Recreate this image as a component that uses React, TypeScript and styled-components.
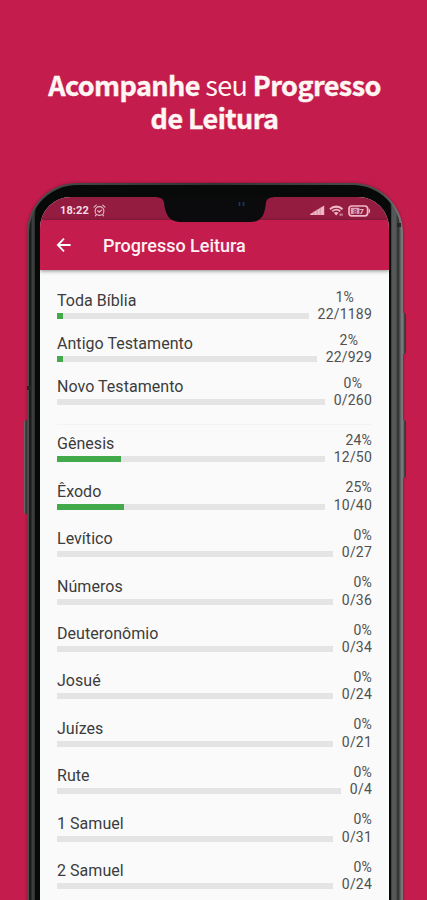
import styled, { createGlobalStyle } from "styled-components";

interface IBook {
  name: string;
  read: number;
  total: number;
  percent: number;
}

const summary: IBook[] = [
  { name: "Toda Bíblia", read: 22, total: 1189, percent: 1 },
  { name: "Antigo Testamento", read: 22, total: 929, percent: 2 },
  { name: "Novo Testamento", read: 0, total: 260, percent: 0 },
];

const books: IBook[] = [
  { name: "Gênesis", read: 12, total: 50, percent: 24 },
  { name: "Êxodo", read: 10, total: 40, percent: 25 },
  { name: "Levítico", read: 0, total: 27, percent: 0 },
  { name: "Números", read: 0, total: 36, percent: 0 },
  { name: "Deuteronômio", read: 0, total: 34, percent: 0 },
  { name: "Josué", read: 0, total: 24, percent: 0 },
  { name: "Juízes", read: 0, total: 21, percent: 0 },
  { name: "Rute", read: 0, total: 4, percent: 0 },
  { name: "1 Samuel", read: 0, total: 31, percent: 0 },
  { name: "2 Samuel", read: 0, total: 24, percent: 0 },
];

function ProgressRow({ book, centered }: { book: IBook; centered?: boolean }) {
  return (
    <Row>
      <RowMain>
        <Name>{book.name}</Name>
        <Track>
          {book.read > 0 ? <Fill style={{ width: `${book.percent}%` }} /> : null}
        </Track>
      </RowMain>
      <Stats $centered={centered}>
        <span>{book.percent}%</span>
        <span>
          {book.read}/{book.total}
        </span>
      </Stats>
    </Row>
  );
}

function AlarmIcon() {
  return (
    <svg width="13" height="13" viewBox="0 0 13 13" fill="none" stroke="#e9bccb" strokeWidth="1.1" strokeLinecap="round">
      <circle cx="6.5" cy="7" r="4.4" />
      <path d="M1 3.2 3.3 1.2M12 3.2 9.7 1.2M4.6 6.6l1.6 1.6 2.4-2.2M3.4 10.6l-1 1.2M9.6 10.6l1 1.2" />
    </svg>
  );
}

function SignalIcon() {
  return (
    <svg width="15" height="11" viewBox="0 0 15 11" fill="#efb6c8">
      <path d="M.2 9 14.2.6V10H.2z" />
      <path d="M3.7 6v4M7.1 4v6M10.200 2v8" stroke="#c0688a" strokeWidth=".5" />
    </svg>
  );
}

function WifiIcon() {
  return (
    <svg width="15" height="12" viewBox="0 0 15 12" fill="none" stroke="#efb6c8">
      <path d="M1 4.2C4.5.8 10 .8 13.5 4.2" strokeWidth="2.2" />
      <path d="M3.3 6.4c2.400-2.100 5.600-2.100 8 0" strokeWidth="1.800" />
      <path d="M4.800 7.700c1.400-1 3.400-1 4.800 0L7.200 10.600z" fill="#efb6c8" stroke="none" />
      <path d="M11.200 8.500v2.300M13 8.500v2.300" strokeWidth="1" />
    </svg>
  );
}

function BatteryIcon() {
  return (
    <svg width="23" height="12" viewBox="0 0 23 12" fill="none">
      <rect x="1" y="1" width="18.6" height="9.8" rx="2.8" stroke="#efb6c8" strokeWidth="1.7" />
      <path d="M20.6 3.2c2 .8 2 4.600 0 5.400z" fill="#efb6c8" />
      <rect x="2.8" y="2.8" width="8.6" height="6.2" rx=".8" fill="#dfa0b4" />
      <text x="5" y="8.8" fontFamily="Roboto, sans-serif" fontSize="8" fontWeight="700" fill="#a03c5e">
        8
      </text>
      <text x="11.2" y="8.8" fontFamily="Roboto, sans-serif" fontSize="8" fontWeight="700" fill="#f0c4d0">
        7
      </text>
    </svg>
  );
}

function BackIcon() {
  return (
    <svg width="16" height="16" viewBox="0 0 16 16" fill="none" stroke="#fff" strokeWidth="1.8">
      <path d="M14.6 8H2M8 1.6 1.8 8 8 14.4" />
    </svg>
  );
}

export default function App() {
  return (
    <Page>
      <GlobalStyle />
      <Headline>
        <b>Acompanhe</b> seu <b>Progresso</b>
        <br />
        <b>de Leitura</b>
      </Headline>
      <Phone>
        <SideKey $side="left" $top={237} $height={94} />
        <SideKey $side="right" $top={130} $height={41} />
        <SideKey $side="right" $top={237} $height={58} />
        <Bezel>
          <Screen>
            <StatusBar>
              <Clock>18:22</Clock>
              <AlarmIcon />
              <StatusIcons>
                <SignalIcon />
                <WifiIcon />
                <BatteryIcon />
              </StatusIcons>
            </StatusBar>
            <Notch width="116" height="27" viewBox="0 0 116 27">
              <path d="M0 0h116v1.5c-4 0-6.4 1.5-7 5C107.5 19 105 26 93 26H25C12 26 8.500 19 7 6.500 6.400 3 4 1.500 0 1.500z" fill="#0b0b0d" />
              <path d="M82.5 6v4M86.500 6v4" stroke="#143a70" strokeWidth="1.6" />
            </Notch>
            <AppBar>
              <BackIcon />
              <Title>Progresso Leitura</Title>
            </AppBar>
            <List>
              <Group $gap={8}>
                {summary.map((book) => (
                  <ProgressRow key={book.name} book={book} centered />
                ))}
              </Group>
              <Divider />
              <Group $gap={12.4}>
                {books.map((book) => (
                  <ProgressRow key={book.name} book={book} />
                ))}
              </Group>
            </List>
          </Screen>
        </Bezel>
        <Antenna $side="left" $top={203} />
        <Antenna $side="right" $top={40} />
      </Phone>
    </Page>
  );
}

const GlobalStyle = createGlobalStyle`
  * {
    box-sizing: border-box;
  }

  body {
    margin: 0;
    background: #c41d4d;
  }
`;

const Page = styled.main`
  width: 427px;
  height: 900px;
  overflow: hidden;
  display: flex;
  flex-direction: column;
  align-items: center;
  background: #c41d4d;
  font-family: Roboto, sans-serif;
`;

const Headline = styled.h1`
  flex: none;
  height: 183px;
  margin: 0 0 0 2px;
  padding-top: 68px;
  color: #fff5f3;
  font-family: "Noto Sans CJK JP", "Noto Sans", sans-serif;
  font-size: 27px;
  font-weight: 400;
  line-height: 33px;
  letter-spacing: -0.6px;
  text-align: center;
  white-space: nowrap;

  b {
    font-weight: 700;
    -webkit-text-stroke: 0.4px #fff5f3;
  }
`;

const Phone = styled.div`
  position: relative;
  flex: none;
  width: 376px;
  height: 760px;
  margin-left: 3px;
  padding: 2px 2px 0;
  border-radius: 50px 50px 0 0;
  background: linear-gradient(90deg, #4a4d4c 0, #303332 50%, #4c4f4e 94%, #77797a 100%);
  box-shadow: 0 0 3px rgba(70, 0, 20, 0.5);
`;

const Bezel = styled.div`
  height: 100%;
  padding: 12px 12px 0 11px;
  border-radius: 48px 48px 0 0;
  background: linear-gradient(
    90deg,
    #1b1d1c 0,
    #1b1d1c 2px,
    #3b3e3d 3px,
    #3b3e3d 5px,
    #080909 7px,
    #080909 calc(100% - 11px),
    #555758 calc(100% - 9px),
    #555758 calc(100% - 5px),
    #292b2b calc(100% - 3px),
    #6b6d6d 100%
  );
`;

const Screen = styled.div`
  position: relative;
  height: 100%;
  overflow: hidden;
  border-radius: 31px 31px 0 0;
  background: #fafafa;
  box-shadow: 0 0 0 2px #080909, 0 -2px 0 6px #080909;
  clip-path: inset(-8px -2px 0 -5px);
`;

const StatusBar = styled.div`
  display: flex;
  align-items: center;
  height: 23px;
  padding: 4px 18px 0 20px;
  background: #931c40;
`;

const Clock = styled.span`
  width: 33px;
  color: #f7dce4;
  font-size: 11px;
  font-weight: 700;
  letter-spacing: 0.1px;
`;

const StatusIcons = styled.div`
  display: flex;
  align-items: center;
  gap: 4px;
  margin-left: auto;
`;

/* Camera cutout, drawn over the status bar and the app bar */
const Notch = styled.svg`
  position: absolute;
  top: -1px;
  left: 117px;
`;

const AppBar = styled.header`
  display: flex;
  align-items: center;
  gap: 31px;
  height: 50px;
  padding: 0 16px;
  background: #c41d4d;
  box-shadow: 0 1px 4px rgba(0, 0, 0, 0.45);
`;

const Title = styled.h2`
  margin: 0;
  color: #fff0f3;
  font-size: 18px;
  font-weight: 500;
`;

const List = styled.div`
  padding: 18px 17px 0;
`;

const Group = styled.div<{ $gap: number }>`
  display: flex;
  flex-direction: column;
  gap: ${(props) => props.$gap}px;
`;

const Divider = styled.hr`
  height: 1px;
  margin: 15px 0 6.4px;
  border: none;
  background: #f3f3f3;
`;

const Row = styled.div`
  display: flex;
  gap: 9px;
  height: 35px;
`;

const RowMain = styled.div`
  flex: 1;
  padding-top: 3px;
`;

const Name = styled.p`
  margin: 0;
  height: 22px;
  color: #3c3c3c;
  font-size: 16px;
  line-height: 20px;
  letter-spacing: 0.04px;
`;

const Track = styled.div`
  height: 6px;
  background: #e4e4e4;
`;

const Fill = styled.div`
  min-width: 6px;
  height: 100%;
  background: #43aa4b;
`;

const Stats = styled.div<{ $centered?: boolean }>`
  display: flex;
  flex-direction: column;
  align-items: ${(props) => (props.$centered ? "center" : "flex-end")};
  padding-top: 0.6px;
  color: #505050;
  font-size: 14px;
  line-height: 17.4px;
  letter-spacing: 0.2px;
`;

const SideKey = styled.i<{ $side: "left" | "right"; $top: number; $height: number }>`
  position: absolute;
  top: ${(props) => props.$top}px;
  ${(props) => props.$side}: -3px;
  width: 3px;
  height: ${(props) => props.$height}px;
  border-radius: ${(props) => (props.$side === "left" ? "2px 0 0 2px" : "0 2px 2px 0")};
  background: linear-gradient(90deg, #777 0, #3a3638 60%);
`;

const Antenna = styled.i<{ $side: "left" | "right"; $top: number }>`
  position: absolute;
  top: ${(props) => props.$top}px;
  ${(props) => props.$side}: ${(props) => (props.$side === "left" ? 0 : 2)}px;
  width: 4px;
  height: 4px;
  background: #242626;
`;
